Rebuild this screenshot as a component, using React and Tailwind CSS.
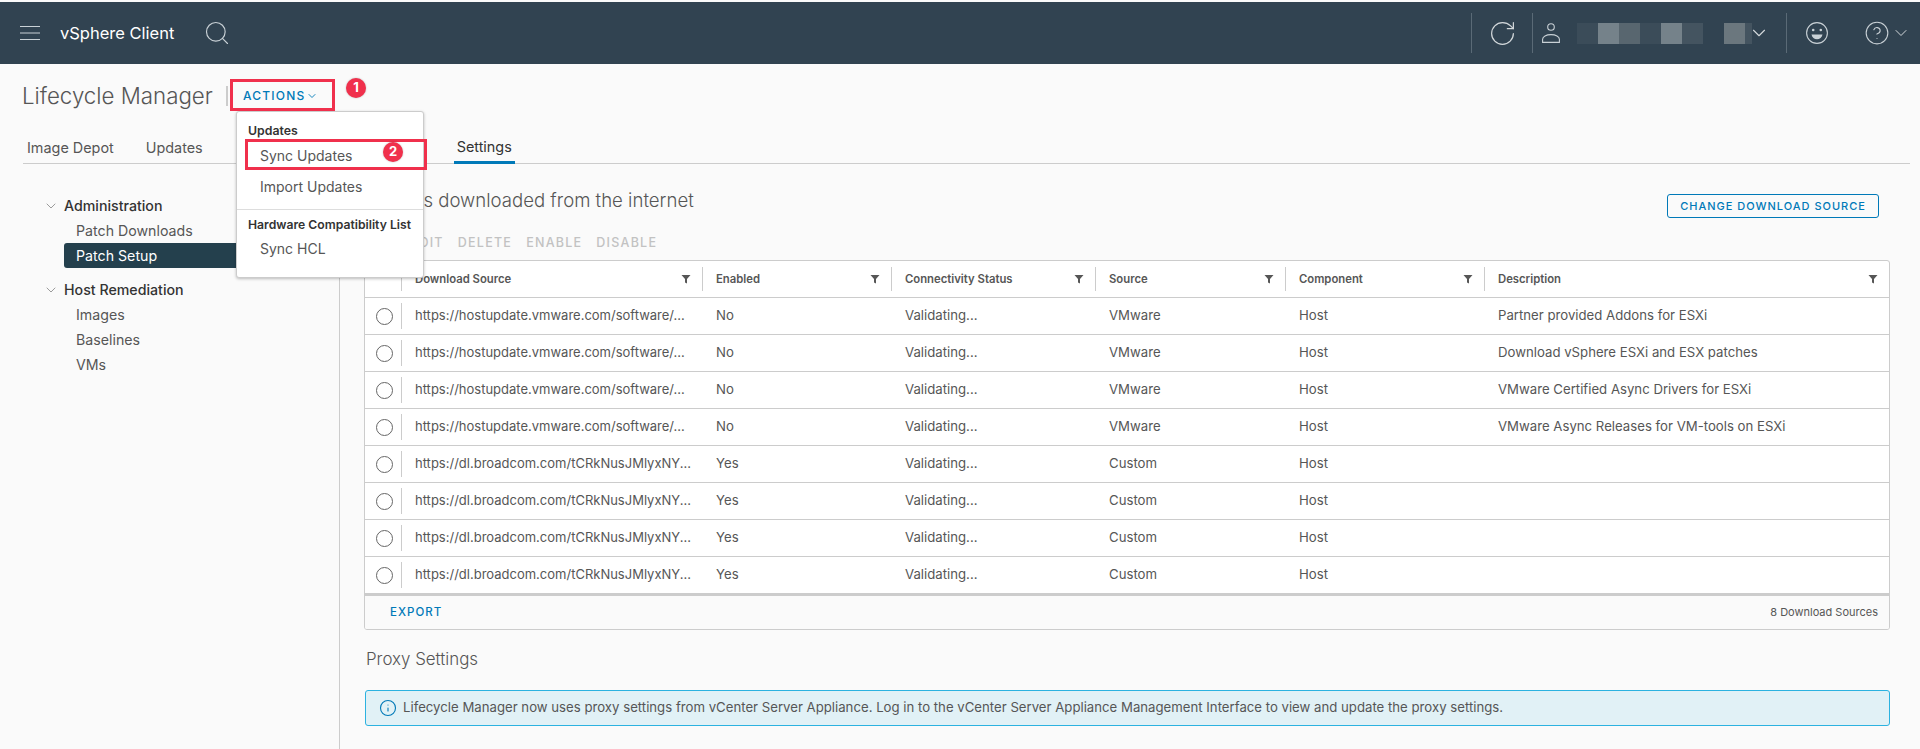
import React from 'react';
import { ChevronDown, CircleHelp, Info, RotateCw, Search } from 'lucide-react';

const FONT = "font-['Inter','Liberation_Sans',sans-serif]";

const COLUMNS = [
  { label: 'Download Source' },
  { label: 'Enabled' },
  { label: 'Connectivity Status' },
  { label: 'Source' },
  { label: 'Component' },
  { label: 'Description', last: true },
];

const VMWARE_URL = 'https://hostupdate.vmware.com/software/...';
const BROADCOM_URL = 'https://dl.broadcom.com/tCRkNusJMlyxNY...';

const ROWS = [
  [VMWARE_URL, 'No', 'Validating...', 'VMware', 'Host', 'Partner provided Addons for ESXi'],
  [VMWARE_URL, 'No', 'Validating...', 'VMware', 'Host', 'Download vSphere ESXi and ESX patches'],
  [VMWARE_URL, 'No', 'Validating...', 'VMware', 'Host', 'VMware Certified Async Drivers for ESXi'],
  [VMWARE_URL, 'No', 'Validating...', 'VMware', 'Host', 'VMware Async Releases for VM-tools on ESXi'],
  [BROADCOM_URL, 'Yes', 'Validating...', 'Custom', 'Host', ''],
  [BROADCOM_URL, 'Yes', 'Validating...', 'Custom', 'Host', ''],
  [BROADCOM_URL, 'Yes', 'Validating...', 'Custom', 'Host', ''],
  [BROADCOM_URL, 'Yes', 'Validating...', 'Custom', 'Host', ''],
];

const GRID = 'grid grid-cols-[37px_301px_189px_204px_190px_199px_1fr]';

const FilterIcon = () => (
  <svg viewBox="0 0 10 10" className="w-[10px] h-[10px] shrink-0">
    <path d="M0.5 1h9L6 5v4.5L4 8.5V5z" fill="#565656" />
  </svg>
);

const MenuIcon = () => (
  <svg viewBox="0 0 20 14" className="w-[20px] h-[14px]" fill="none" stroke="#c9d1d6" strokeWidth="1">
    <path d="M0 0.5h20M0 7h20M0 13.5h20" />
  </svg>
);

const UserIcon = () => (
  <svg viewBox="0 0 18 20" className="w-[18px] h-[20px]" fill="none" stroke="#c9d1d6" strokeWidth="1.1">
    <circle cx="9" cy="4" r="3.3" />
    <path d="M0.6 19.4v-3.2c0-2.6 3.6-4.6 8.4-4.6s8.4 2 8.4 4.6v3.2z" />
  </svg>
);

const SmileIcon = () => (
  <svg viewBox="0 0 22 22" className="w-[22px] h-[22px]" fill="none" stroke="#c9d1d6" strokeWidth="1.1">
    <circle cx="11" cy="11" r="10.4" />
    <circle cx="7.2" cy="8" r="1.3" fill="#c9d1d6" stroke="none" />
    <circle cx="14.8" cy="8" r="1.3" fill="#c9d1d6" stroke="none" />
    <path d="M5.5 12.5h11c-.5 3-2.8 4.8-5.5 4.8s-5-1.8-5.5-4.8z" fill="#c9d1d6" stroke="none" />
  </svg>
);

const Divider = () => <div className="w-px h-[40px] bg-[#5a6a76]" />;

const Badge = ({ children, className }) => (
  <div className={`absolute w-[20px] h-[20px] rounded-full bg-[#f0304c] text-white text-[13px] font-bold flex items-center justify-center shadow-[0_0_2px_rgba(0,0,0,0.25)] ${className}`}>
    {children}
  </div>
);

const Header = () => (
  <header className="mt-[2px] h-[62px] bg-[#314351] flex items-center">
    <div className="ml-[20px]"><MenuIcon /></div>
    <span className="ml-[20px] text-[16.5px] text-white">vSphere Client</span>
    <Search className="ml-[29px] w-[28px] h-[28px] text-[#c9d1d6]" strokeWidth={1} />
    <div className="ml-auto flex items-center h-full">
      <Divider />
      <RotateCw className="ml-[16px] w-[29px] h-[29px] text-[#d3d8db]" strokeWidth={1} />
      <div className="ml-[15px]"><Divider /></div>
      <div className="ml-[9px]"><UserIcon /></div>
      <div className="ml-[17px] flex h-[21px]">
        <div className="w-[21px] bg-[#3b4c59]" />
        <div className="w-[21px] bg-[#75828a]" />
        <div className="w-[21px] bg-[#58666f]" />
        <div className="w-[21px] bg-[#3b4c59]" />
        <div className="w-[21px] bg-[#75828a]" />
        <div className="w-[21px] bg-[#445460]" />
        <div className="w-[21px]" />
        <div className="w-[21px] bg-[#6b777e]" />
        <div className="w-[7px] bg-[#445460]" />
      </div>
      <ChevronDown className="-ml-[4px] w-[22px] h-[22px] text-[#d3d8db]" strokeWidth={1.2} />
      <div className="ml-[16px]"><Divider /></div>
      <div className="ml-[19px]"><SmileIcon /></div>
      <CircleHelp className="ml-[36px] w-[26px] h-[26px] text-[#c9d1d6]" strokeWidth={1} />
      <ChevronDown className="ml-[1px] mr-[9px] w-[20px] h-[20px] text-[#d3d8db]" strokeWidth={1.2} />
    </div>
  </header>
);

const TreeGroup = ({ label, children }) => (
  <div>
    <div className="flex items-center h-[24px] text-[14.2px] font-medium text-[#333]">
      <ChevronDown className="w-[16px] h-[16px] mr-[5px] text-[#777]" strokeWidth={1.1} />
      {label}
    </div>
    <div className="ml-[21px] mr-[9px]">{children}</div>
  </div>
);

const TreeItem = ({ label, selected }) => (
  <div className={`h-[25px] pl-[12px] flex items-center text-[14.2px] rounded-[3px] ${selected ? 'bg-[#24404d] text-white' : 'text-[#565656]'}`}>
    {label}
  </div>
);

const Sidebar = () => (
  <aside className="w-[317px] shrink-0 border-r border-[#ccc] pt-[30px] pl-[20px] h-[585px]">
    <TreeGroup label="Administration">
      <TreeItem label="Patch Downloads" />
      <TreeItem label="Patch Setup" selected />
    </TreeGroup>
    <div className="h-[10px]" />
    <TreeGroup label="Host Remediation">
      <TreeItem label="Images" />
      <TreeItem label="Baselines" />
      <TreeItem label="VMs" />
    </TreeGroup>
  </aside>
);

const DownloadTable = () => (
  <div className="border border-[#ccc] rounded-[3px] bg-white overflow-hidden">
    <div className={`${GRID} h-[37px] border-b border-[#ccc]`}>
      <div className="my-[6px] border-r border-[#ccc]" />
      {COLUMNS.map(col => (
        <div
          key={col.label}
          className={`my-[6px] pl-[13px] pr-[11px] flex items-center justify-between text-[11.3px] font-semibold text-[#565656] ${col.last ? '' : 'border-r border-[#ccc]'}`}
        >
          <span>{col.label}</span>
          <FilterIcon />
        </div>
      ))}
    </div>
    {ROWS.map((row, i) => (
      <div key={i} className={`${GRID} ${i === ROWS.length - 1 ? 'h-[36px]' : 'h-[37px] border-b border-[#ccc]'}`}>
        <div className="my-[5px] pl-[3px] border-r border-[#ccc] flex items-center justify-center">
          <div className="w-[17px] h-[17px] rounded-full border border-[#666] bg-white" />
        </div>
        {row.map((cell, j) => (
          <div key={j} className={`pl-[13px] flex items-center text-[#565656] whitespace-nowrap ${j === 0 ? 'text-[13px]' : 'text-[13.2px]'}`}>
            {cell}
          </div>
        ))}
      </div>
    ))}
    <div className="h-[36px] border-t-[3px] border-[#ccc] bg-[#fafafa] pl-[25px] pr-[11px] flex items-center justify-between">
      <span className="text-[11.5px] font-medium tracking-[0.09em] text-[#0079b8]">EXPORT</span>
      <span className="text-[11px] text-[#565656]">8 Download Sources</span>
    </div>
  </div>
);

const Content = () => (
  <section className="flex-1 min-w-0 pl-[24px] pr-[30px] pt-[24px]">
    <div className="flex items-start justify-between">
      <h2 className="text-[18.6px] leading-[24px] font-light text-[#565656]">Patches downloaded from the internet</h2>
      <button className="mt-[6px] mr-[11px] h-[24px] w-[212px] border border-[#0079b8] rounded-[3px] text-[11px] font-medium tracking-[0.09em] text-[#0079b8]">
        CHANGE DOWNLOAD SOURCE
      </button>
    </div>
    <div className="mt-[13px] ml-[2px] h-[24px] flex items-center gap-[14px] text-[12.5px] font-medium tracking-[0.1em] text-[#c2c2c2]">
      <span>ADD</span>
      <span>EDIT</span>
      <span>DELETE</span>
      <span>ENABLE</span>
      <span>DISABLE</span>
    </div>
    <div className="mt-[5px]"><DownloadTable /></div>
    <h3 className="mt-[17px] ml-[2px] h-[24px] leading-[24px] text-[16.9px] font-light text-[#565656]">Proxy Settings</h3>
    <div className="mt-[19px] ml-[1px] h-[36px] border border-[#2cb2e0] rounded-[3px] bg-[#e1f1f6] flex items-center pl-[13px] text-[13.2px] text-[#565656] whitespace-nowrap">
      <Info className="w-[18px] h-[18px] mr-[6px] text-[#0079b8]" strokeWidth={1.5} />
      Lifecycle Manager now uses proxy settings from vCenter Server Appliance. Log in to the vCenter Server Appliance Management Interface to view and update the proxy settings.
    </div>
  </section>
);

const ActionsMenu = () => (
  <div className="absolute left-[236px] top-[111px] w-[188px] h-[167px] bg-white border border-[#ccc] rounded-[3px] shadow-[0_1px_3px_rgba(0,0,0,0.25)] text-[14px] text-[#565656]">
    <div className="mt-[11px] h-[17px] pl-[11px] flex items-center text-[12.3px] font-semibold text-[#333]">Updates</div>
    <div className="h-[31px] pl-[23px] flex items-center">Sync Updates</div>
    <div className="h-[31px] pl-[23px] flex items-center">Import Updates</div>
    <div className="mt-[7px] border-t border-[#ddd]" />
    <div className="h-[30px] pl-[11px] flex items-center text-[12.2px] font-semibold text-[#333] whitespace-nowrap">Hardware Compatibility List</div>
    <div className="h-[17px] pl-[23px] flex items-center">Sync HCL</div>
  </div>
);

export default function App() {
  return (
    <div className={`relative w-[1920px] h-[749px] overflow-hidden bg-[#fafafa] ${FONT}`}>
      <Header />
      <div className="pl-[23px] pr-[10px]">
        <div className="h-[69px] pb-[5px] flex items-center">
          <h1 className="-ml-[1px] w-[190px] whitespace-nowrap text-[22.3px] font-light text-[#565656]">Lifecycle Manager</h1>
          <div className="ml-[14px] w-[2px] h-[20px] bg-[#ccc]" />
          <div className="ml-[15px] flex items-center text-[12px] font-medium tracking-[0.1em] text-[#0079b8]">
            ACTIONS
            <ChevronDown className="ml-[1px] w-[12px] h-[12px]" strokeWidth={1.8} />
          </div>
        </div>
        <div className="h-[31px] border-b border-[#ccc] flex text-[14.4px] text-[#565656]">
          <span className="ml-[4px] h-[30px] flex items-center">Image Depot</span>
          <span className="ml-[32px] h-[30px] flex items-center">Updates</span>
          <span className="ml-[251px] w-[61px] h-[31px] flex items-center justify-center border-b-[3px] border-[#0079b8] text-[#333]">Settings</span>
        </div>
      </div>
      <div className="flex pl-[23px]">
        <Sidebar />
        <Content />
      </div>
      <ActionsMenu />
      <div className="absolute left-[230px] top-[79px] w-[105px] h-[32px] border-[3px] border-[#f0304c]" />
      <div className="absolute left-[245px] top-[139px] w-[182px] h-[31px] border-[3px] border-[#f0304c]" />
      <Badge className="left-[346px] top-[78px]">1</Badge>
      <Badge className="left-[383px] top-[142px]">2</Badge>
    </div>
  );
}
